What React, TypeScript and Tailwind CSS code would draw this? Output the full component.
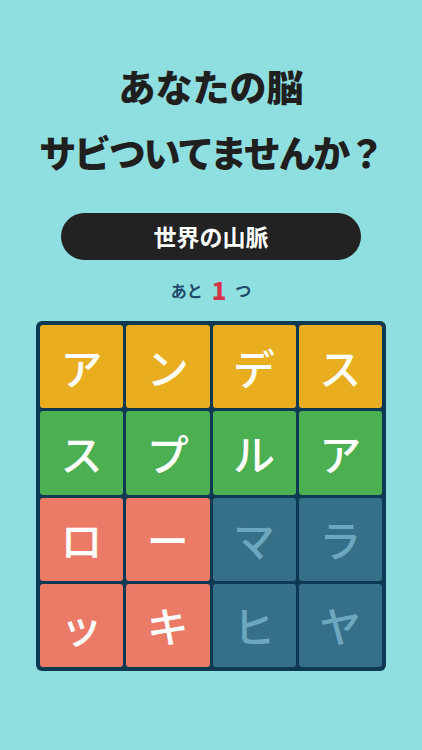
const jp = { fontFamily: '"Noto Sans CJK JP", "Noto Sans", sans-serif' }

type Tile = { ch: string; color: string; text: string }

const Y = 'bg-[#e8ae1f]'
const G = 'bg-[#4caf52]'
const R = 'bg-[#eb7b66]'
const B = 'bg-[#366f88]'

const tiles: Tile[] = [
  { ch: 'ア', color: Y, text: 'text-white' },
  { ch: 'ン', color: Y, text: 'text-white' },
  { ch: 'デ', color: Y, text: 'text-white' },
  { ch: 'ス', color: Y, text: 'text-white' },
  { ch: 'ス', color: G, text: 'text-white' },
  { ch: 'プ', color: G, text: 'text-white' },
  { ch: 'ル', color: G, text: 'text-white' },
  { ch: 'ア', color: G, text: 'text-white' },
  { ch: 'ロ', color: R, text: 'text-white' },
  { ch: 'ー', color: R, text: 'text-white' },
  { ch: 'マ', color: B, text: 'text-[#6da7bf]' },
  { ch: 'ラ', color: B, text: 'text-[#6da7bf]' },
  { ch: 'ッ', color: R, text: 'text-white' },
  { ch: 'キ', color: R, text: 'text-white' },
  { ch: 'ヒ', color: B, text: 'text-[#6da7bf]' },
  { ch: 'ヤ', color: B, text: 'text-[#6da7bf]' },
]

export default function App() {
  return (
    <div className="w-[422px] h-[750px] bg-[#8fdee0] flex flex-col items-center pt-[53px]" style={jp}>
      <h1 className="text-[37px] leading-[66px] font-black text-[#1f1f1f] text-center">
        <div>あなたの脳</div>
        <div className="tracking-[-0.06em]">サビついてませんか？</div>
      </h1>

      <div className="mt-[28px] w-[300px] h-[47px] rounded-full bg-[#222222] flex items-center justify-center">
        <span className="text-white text-[23px] font-bold">世界の山脈</span>
      </div>

      <div className="mt-[18px] h-[24px] flex items-center gap-[9px] text-[#1c4b6b] font-bold">
        <span className="text-[16px]">あと</span>
        <span className="text-[24px] text-[#d5324b] font-black">1</span>
        <span className="text-[16px]">つ</span>
      </div>

      <div className="mt-[19px] w-[350px] bg-[#0d3a52] rounded-[6px] p-[4px] grid grid-cols-4 gap-[3px]">
        {tiles.map((t, i) => (
          <div
            key={i}
            className={`${t.color} ${t.text} aspect-square rounded-[3px] flex items-center justify-center text-[42px] font-medium leading-none`}
          >
            {t.ch}
          </div>
        ))}
      </div>
    </div>
  )
}
